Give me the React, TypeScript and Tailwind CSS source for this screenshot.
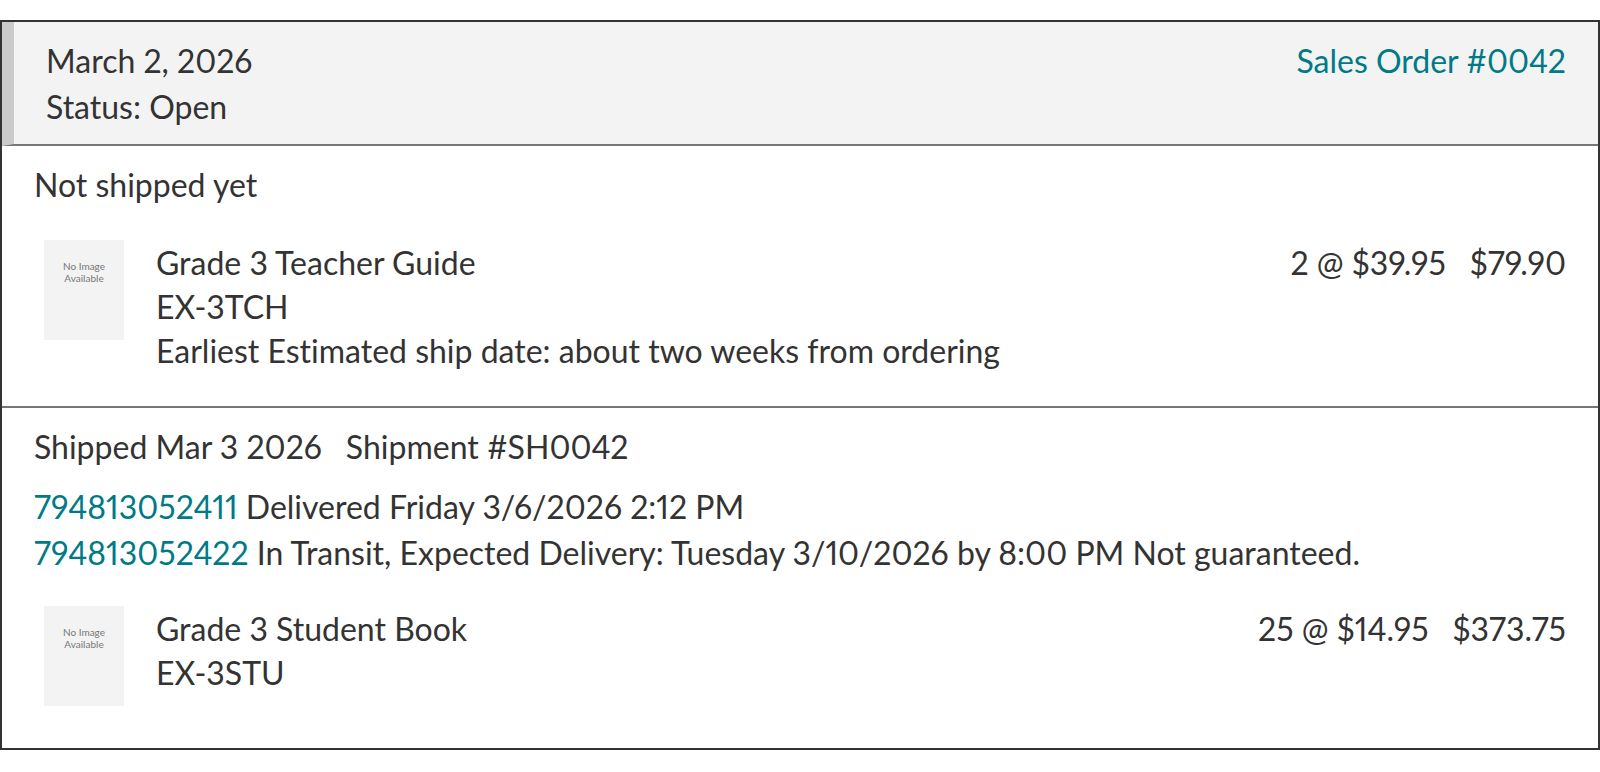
import React from 'react';

interface Item {
  name: string;
  sku: string;
  shipDate?: string;
  quantity: string;
  total: string;
}

const items: Item[] = [
  {
    name: 'Grade 3 Teacher Guide',
    sku: 'EX-3TCH',
    shipDate: 'Earliest Estimated ship date: about two weeks from ordering',
    quantity: '2 @ $39.95',
    total: '$79.90',
  },
  { name: 'Grade 3 Student Book', sku: 'EX-3STU', quantity: '25 @ $14.95', total: '$373.75' },
];

const ItemRow: React.FC<{ item: Item }> = ({ item }) => (
  <div className="flex items-start pl-[10px]">
    <div className="w-20 h-[100px] shrink-0 bg-[#f3f3f3] pt-5 text-center text-[10px] leading-3 text-[#777]">
      No Image
      <br />
      Available
    </div>
    <div className="ml-8 mt-px flex-1 leading-[44px]">
      <div className="flex justify-between">
        <p>{item.name}</p>
        <p className="flex gap-6">
          <span>{item.quantity}</span>
          <span>{item.total}</span>
        </p>
      </div>
      <p>{item.sku}</p>
      {item.shipDate && <p>{item.shipDate}</p>}
    </div>
  </div>
);

const App: React.FC = () => {
  return (
    <main className="py-5 bg-white font-['Lato',sans-serif] text-[32px] leading-[46px] text-[#333] proportional-nums [font-variant-ligatures:none]">
      <article className="border-2 border-[#333]">
        <header className="flex justify-between border-l-[12px] border-b-2 border-l-[#cbcbcb] border-b-[#767676] bg-[#f3f3f3] px-8 pt-4 pb-[14px]">
          <div>
            <p>March 2, 2026</p>
            <p>Status: Open</p>
          </div>
          <a href="#order" className="text-[#007a87]">Sales Order #0042</a>
        </header>
        <section className="border-b-2 border-[#767676] px-8 pt-4 pb-[33px]">
          <h2 className="mb-8">Not shipped yet</h2>
          <ItemRow item={items[0]} />
        </section>
        <section className="px-8 pt-4 pb-[42px]">
          <h2 className="mb-[14px] flex gap-6">
            <span>Shipped Mar 3 2026</span>
            <span>Shipment #SH0042</span>
          </h2>
          <div className="mb-[30px]">
            <p>
              <a href="#794813052411" className="text-[#007a87]">794813052411</a> Delivered Friday 3/6/2026 2:12 PM
            </p>
            <p>
              <a href="#794813052422" className="text-[#007a87]">794813052422</a> In Transit, Expected Delivery: Tuesday 3/10/2026 by 8:00 PM Not guaranteed.
            </p>
          </div>
          <ItemRow item={items[1]} />
        </section>
      </article>
    </main>
  );
};

export default App;
